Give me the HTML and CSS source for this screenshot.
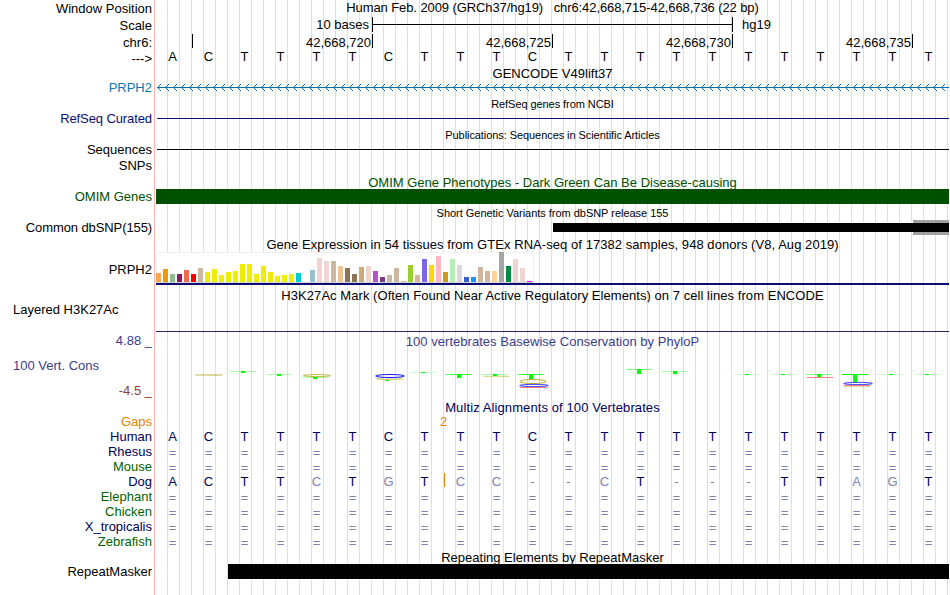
FILE: index.html
```
<!DOCTYPE html>
<html lang="en">
<head>
    <meta charset="UTF-8">
    <meta name="viewport" content="width=device-width, initial-scale=1.0">
    <title>Genome Browser - PRPH2</title>
    <link rel="stylesheet" href="styles.css">
</head>
<body>
    <div class="browser">
        <!-- Ruler -->
        <div class="row position">
            <div class="label">Window Position</div>
            <div class="data title t-position">Human Feb. 2009 (GRCh37/hg19)   chr6:42,668,715-42,668,736 (22 bp)</div>
        </div>
        <div class="row scale">
            <div class="label">Scale</div>
            <div class="data">
                <span class="scale-size">10 bases</span>
                <div class="scale-bar"><div class="scale-line"></div></div>
                <span class="scale-db">hg19</span>
            </div>
        </div>
        <div class="row ruler">
            <div class="label">chr6:</div>
            <div class="data">
                <span class="tick first"></span>
                <span class="tick">42,668,720</span>
                <span class="tick">42,668,725</span>
                <span class="tick">42,668,730</span>
                <span class="tick">42,668,735</span>
            </div>
        </div>
        <div class="row sequence">
            <div class="label">---&gt;</div>
            <div class="data"><div class="bases" data-seq="ACTTTTCTTTCTTTTTTTTTTT"></div></div>
        </div>

        <!-- Genes -->
        <div class="row title-row">
            <div class="label"></div>
            <div class="data title">GENCODE V49lift37</div>
        </div>
        <div class="row gencode">
            <div class="label">PRPH2</div>
            <div class="data">
                <svg width="793" height="15" shape-rendering="crispEdges">
                    <defs>
                        <pattern id="intron" width="8" height="15" patternUnits="userSpaceOnUse">
                            <path d="M4 4h1v1h-1zM3 5h1v1h-1zM2 6h1v1h-1zM1 7h1v1h-1zM2 8h1v1h-1zM3 9h1v1h-1zM4 10h1v1h-1z"/>
                        </pattern>
                    </defs>
                    <rect x="1" y="7" width="792" height="1"/>
                    <rect width="790" height="15" fill="url(#intron)"/>
                </svg>
            </div>
        </div>
        <div class="row small-row">
            <div class="label"></div>
            <div class="data title small t-refseq">RefSeq genes from NCBI</div>
        </div>
        <div class="row refseq">
            <div class="label">RefSeq Curated</div>
            <div class="data"><div class="line"></div></div>
        </div>
        <div class="row small-row">
            <div class="label"></div>
            <div class="data title small t-pubs">Publications: Sequences in Scientific Articles</div>
        </div>
        <div class="row">
            <div class="label">Sequences</div>
            <div class="data"><div class="line"></div></div>
        </div>
        <div class="row snps">
            <div class="label">SNPs</div>
            <div class="data"></div>
        </div>

        <!-- Phenotypes and variants -->
        <div class="row title-row omim">
            <div class="label"></div>
            <div class="data title">OMIM Gene Phenotypes - Dark Green Can Be Disease-causing</div>
        </div>
        <div class="row omim">
            <div class="label">OMIM Genes</div>
            <div class="data"><div class="bar"></div></div>
        </div>
        <div class="row small-row">
            <div class="label"></div>
            <div class="data title small t-dbsnp">Short Genetic Variants from dbSNP release 155</div>
        </div>
        <div class="row dbsnp">
            <div class="label">Common dbSNP(155)</div>
            <div class="data">
                <div class="variant"></div>
                <div class="variant overlap"></div>
            </div>
        </div>

        <!-- Expression -->
        <div class="row gtex-title">
            <div class="label"></div>
            <div class="data title t-gtex">Gene Expression in 54 tissues from GTEx RNA-seq of 17382 samples, 948 donors (V8, Aug 2019)</div>
        </div>
        <div class="row gtex">
            <div class="label">PRPH2</div>
            <div class="data"><div class="chart" id="gtex"></div></div>
        </div>

        <!-- Regulation -->
        <div class="row h3k-title">
            <div class="label"></div>
            <div class="data title t-h3k">H3K27Ac Mark (Often Found Near Active Regulatory Elements) on 7 cell lines from ENCODE</div>
        </div>
        <div class="row h3k">
            <div class="label left">Layered H3K27Ac</div>
            <div class="data"></div>
        </div>

        <!-- Conservation -->
        <div class="row cons">
            <div class="label">
                <div>4.88 _</div>
                <div class="left">100 Vert. Cons</div>
                <div class="min">-4.5 _</div>
            </div>
            <div class="data">
                <div class="title t-cons">100 vertebrates Basewise Conservation by PhyloP</div>
                <svg class="logo" width="793" height="49" viewBox="156 349 793 49">
                    <!-- thin caps of the T letters -->
                    <g class="cap" shape-rendering="crispEdges">
                        <rect x="230" y="371" width="26" height="1" opacity=".35"/>
                        <rect x="266" y="374" width="26" height="1" opacity=".3"/>
                        <rect x="302" y="377" width="26" height="1" opacity=".3"/>
                        <rect x="410" y="372" width="26" height="1" opacity=".2"/>
                        <rect x="446" y="374" width="26" height="1" opacity=".75"/>
                        <rect x="482" y="374" width="26" height="1" opacity=".35"/>
                        <rect x="518" y="374" width="26" height="1" opacity=".8"/>
                        <rect x="626" y="369" width="26" height="1" opacity=".5"/>
                        <rect x="662" y="371" width="26" height="1" opacity=".35"/>
                        <rect x="734" y="374" width="26" height="1" opacity=".2"/>
                        <rect x="770" y="374" width="26" height="1" opacity=".2"/>
                        <rect x="806" y="374" width="26" height="1" opacity=".5"/>
                        <rect x="842" y="374" width="26" height="1"/>
                        <rect x="878" y="374" width="26" height="1" opacity=".2"/>
                        <rect x="914" y="374" width="26" height="1" opacity=".2"/>
                    </g>
                    <!-- stems -->
                    <g class="stem" shape-rendering="crispEdges">
                        <rect x="241" y="371" width="4" height="2"/>
                        <rect x="277" y="374" width="4" height="2"/>
                        <rect x="313" y="377" width="4" height="2"/>
                        <rect x="385" y="380" width="4" height="1"/>
                        <rect x="421" y="372" width="4" height="1"/>
                        <rect x="457" y="374" width="4" height="4"/>
                        <rect x="493" y="374" width="4" height="2"/>
                        <rect x="529" y="374" width="4" height="5"/>
                        <rect x="637" y="369" width="4" height="5"/>
                        <rect x="673" y="371" width="4" height="3"/>
                        <rect x="745" y="374" width="4" height="1"/>
                        <rect x="781" y="374" width="4" height="1"/>
                        <rect x="817" y="374" width="4" height="3"/>
                        <rect x="853" y="374" width="4" height="8"/>
                        <rect x="889" y="374" width="4" height="1"/>
                        <rect x="925" y="374" width="4" height="1"/>
                    </g>
                    <!-- G -->
                    <g class="g">
                        <ellipse cx="209" cy="375" rx="13.5" ry=".4" opacity=".4"/>
                        <ellipse cx="317" cy="375.6" rx="13.5" ry="1" opacity=".7"/>
                        <ellipse cx="389.5" cy="378.7" rx="13" ry=".8" opacity=".5"/>
                        <ellipse cx="496.5" cy="376.4" rx="13" ry=".3" opacity=".3"/>
                        <ellipse cx="533" cy="381.5" rx="13.2" ry="2" opacity=".85"/>
                        <ellipse cx="857" cy="386.3" rx="13" ry=".3" opacity=".3"/>
                    </g>
                    <!-- C -->
                    <g class="c">
                        <ellipse cx="390" cy="376" rx="14.3" ry="1.5"/>
                        <ellipse cx="534" cy="385.5" rx="14.3" ry="1.1" opacity=".8"/>
                        <ellipse cx="858" cy="383.5" rx="14.3" ry="1.1" opacity=".8"/>
                    </g>
                    <!-- A -->
                    <g class="a" shape-rendering="crispEdges">
                        <rect x="520" y="387" width="27" height="1"/>
                        <rect x="807" y="377" width="26" height="1"/>
                        <rect x="844" y="385" width="26" height="1"/>
                    </g>
                </svg>
            </div>
        </div>

        <!-- Alignments -->
        <div class="row multiz-title">
            <div class="label"></div>
            <div class="data title t-multiz">Multiz Alignments of 100 Vertebrates</div>
        </div>
        <div class="row gaps">
            <div class="label">Gaps</div>
            <div class="data"><span class="gap-size">2</span></div>
        </div>
        <div class="row species">
            <div class="label">Human</div>
            <div class="data"><div class="bases" data-seq="ACTTTTCTTTCTTTTTTTTTTT"></div></div>
        </div>
        <div class="row species">
            <div class="label">Rhesus</div>
            <div class="data"><div class="bases" data-seq="======================"></div></div>
        </div>
        <div class="row species green">
            <div class="label">Mouse</div>
            <div class="data"><div class="bases" data-seq="======================"></div></div>
        </div>
        <div class="row species">
            <div class="label">Dog</div>
            <div class="data">
                <div class="bases" data-seq="ACTTcTgTcc--cT---TTagT"></div>
                <span class="insert"></span>
            </div>
        </div>
        <div class="row species green">
            <div class="label">Elephant</div>
            <div class="data"><div class="bases" data-seq="======================"></div></div>
        </div>
        <div class="row species green">
            <div class="label">Chicken</div>
            <div class="data"><div class="bases" data-seq="======================"></div></div>
        </div>
        <div class="row species">
            <div class="label">X_tropicalis</div>
            <div class="data"><div class="bases" data-seq="======================"></div></div>
        </div>
        <div class="row species green">
            <div class="label">Zebrafish</div>
            <div class="data"><div class="bases" data-seq="======================"></div></div>
        </div>

        <!-- Repeats -->
        <div class="row repeat-title">
            <div class="label"></div>
            <div class="data title">Repeating Elements by RepeatMasker</div>
        </div>
        <div class="row repeat">
            <div class="label">RepeatMasker</div>
            <div class="data"><div class="bar"></div></div>
        </div>
        <div class="row footer">
            <div class="label"></div>
            <div class="data"></div>
        </div>
    </div>

    <script>
        // One cell per base. Lower case marks a base that differs from human.
        document.querySelectorAll('.bases').forEach(el => {
            for (const base of el.dataset.seq) {
                const cell = document.createElement('span');
                cell.textContent = base.toUpperCase();
                if (base === '=') cell.className = 'unaligned';
                else if (base === '-' || base !== base.toUpperCase()) cell.className = 'mismatch';
                el.appendChild(cell);
            }
        });

        // Tissue colour and bar height in pixels
        const tissues = [
            ['#ffa54f', 9], ['#ee9a00', 13], ['#8fbc8f', 8], ['#8b1c62', 8], ['#ee6a50', 12], ['#ff0000', 8],
            ['#cdb79e', 14], ['#eeee00', 10], ['#eeee00', 13], ['#eeee00', 7], ['#eeee00', 10], ['#eeee00', 11],
            ['#eeee00', 18], ['#eeee00', 18], ['#eeee00', 8], ['#eeee00', 16], ['#eeee00', 10], ['#eeee00', 6],
            ['#eeee00', 7], ['#eeee00', 8], ['#00cdcd', 9], ['#ee82ee', 0], ['#9ac0cd', 12], ['#eed5d2', 24],
            ['#eed5d2', 21], ['#cdb79e', 21], ['#eec591', 16], ['#8b7355', 14], ['#8b7355', 8], ['#cdaa7d', 15],
            ['#eed5d2', 16], ['#b452cd', 11], ['#7a378b', 5], ['#cdb79e', 7], ['#cdb79e', 14], ['#cdb79e', 1],
            ['#9acd32', 17], ['#cdb79e', 7], ['#7a67ee', 23], ['#ffd700', 17], ['#ffb6c1', 26], ['#cd9b1d', 10],
            ['#b4eeb4', 23], ['#d9d9d9', 17], ['#3a5fcd', 5], ['#1e90ff', 5], ['#cdb79e', 15], ['#cdb79e', 11],
            ['#ffd39b', 11], ['#a6a6a6', 30], ['#008b45', 16], ['#eed5d2', 23], ['#eed5d2', 14], ['#ff00ff', 1]
        ];
        const chart = document.getElementById('gtex');
        tissues.forEach(([color, height]) => {
            const bar = document.createElement('div');
            bar.style.height = `${height}px`;
            bar.style.background = color;
            chart.appendChild(bar);
        });
    </script>
</body>
</html>
```
FILE: styles.css
```
* {
    margin: 0;
    padding: 0;
    box-sizing: border-box;
}

body {
    background: #fff;
    color: #000;
    font: 13px/15px "Liberation Sans", Arial, sans-serif;
    overflow: hidden;
}

.browser {
    width: 949px;
}

.row {
    display: flex;
    height: 15px;
}

.label {
    width: 155px;
    padding-right: 2px;
    border-right: 1px solid #ffb4b4;
    text-align: right;
    white-space: nowrap;
}

.label.left,
.label .left {
    padding-left: 13px;
    text-align: left;
}

/* vertical guide lines every 12px */
.data {
    position: relative;
    width: 793px;
    margin-left: 1px;
    background: repeating-linear-gradient(to right, transparent 0 11px, #dcdcfa 11px 12px);
}

.title {
    text-align: center;
    white-space: pre;
}

.small {
    font-size: 11px;
}

.t-position {
    letter-spacing: -0.09px;
}

.t-refseq,
.t-pubs {
    letter-spacing: -0.07px;
}

.t-dbsnp {
    letter-spacing: -0.03px;
}

.t-gtex,
.t-h3k {
    letter-spacing: 0.055px;
}

.t-cons {
    letter-spacing: 0.03px;
}

.t-multiz {
    letter-spacing: 0.1px;
}

.title-row {
    height: 14px;
}

.small-row {
    height: 16px;
}

.small-row .data {
    padding-top: 2px;
}

.line {
    height: 8px;
    margin-left: 1px;
    border-bottom: 1px solid currentColor;
}

.bar {
    height: 15px;
    background: currentColor;
}

.bases {
    display: grid;
    grid-template-columns: repeat(22, 36px);
    margin-left: -1.5px;
    text-align: center;
}

/* Ruler */
.position {
    height: 17px;
}

.position .label,
.scale .label,
.ruler .label {
    padding-top: 1px;
}

.scale {
    height: 17px;
}

.scale .data,
.ruler .data {
    display: flex;
}

.scale-size {
    width: 213px;
    text-align: right;
}

.scale-bar {
    width: 361px;
    height: 15px;
    margin-left: 3px;
    border: solid #000;
    border-width: 0 1px;
}

.scale-line {
    height: 8px;
    border-bottom: 1px solid #000;
}

.scale-db {
    margin-left: 9px;
}

.tick {
    width: 180px;
    height: 14px;
    padding: 1px 1px 0 0;
    border-right: 1px solid #000;
    text-align: right;
}

.tick.first {
    width: 37px;
}

.sequence {
    height: 17px;
}

.sequence .label {
    padding-top: 2px;
}

/* Genes */
.gencode .label {
    color: #0c78b4;
}

.gencode svg {
    display: block;
    fill: #0c6eaa;
}

.refseq {
    color: #0c0c78;
}

.refseq .label,
.dbsnp .label {
    letter-spacing: -0.1px;
}

.snps {
    height: 18px;
}

.snps .label {
    padding-top: 1px;
}

/* Phenotypes and variants */
.omim {
    color: #005000;
}

.dbsnp .data {
    display: flex;
    align-items: center;
    justify-content: flex-end;
}

.variant {
    width: 360px;
    height: 9px;
    background: #000;
}

.variant.overlap {
    width: 36px;
    height: 15px;
    border: solid #a0a0a0;
    border-width: 3px 0;
}

/* Expression */
.gtex-title {
    height: 17px;
}

.gtex-title .data {
    padding-top: 2px;
}

.gtex {
    height: 33px;
}

.gtex .label {
    padding-top: 10px;
}

.gtex .data {
    border-bottom: 2px solid #0c0c78;
}

.chart {
    display: flex;
    align-items: flex-end;
    gap: 2px;
    width: 378px;
    height: 31px;
    background: #fff;
    border-bottom: 1px solid #d4d4d4;
    box-shadow: inset 1px 1px #f0f0f0, inset -1px 0 #f0f0f0;
}

.chart div {
    width: 5px;
}

/* Regulation */
.h3k-title {
    height: 17px;
}

.h3k-title .data {
    padding-top: 3px;
}

.h3k {
    height: 30px;
}

.h3k .data {
    border-bottom: 1px solid #28285a;
}

/* Conservation */
.cons {
    height: 66px;
    color: #3c3c8c;
}

.cons .label {
    display: flex;
    flex-direction: column;
    gap: 10px;
    padding-top: 1px;
}

.cons .min {
    color: #8c3c3c;
}

.cons .data {
    padding-top: 2px;
}

.logo {
    display: block;
}

.cap,
.stem {
    fill: #00ff00;
}

.g,
.c {
    fill: none;
}

.g {
    stroke: #aaa000;
}

.c {
    stroke: #1414ff;
}

.a {
    fill: #ff8080;
}

/* Alignments */
.multiz-title {
    height: 16px;
    color: #00005a;
}

.multiz-title .data {
    padding-top: 2px;
}

.gaps {
    color: #e68200;
}

.gap-size {
    display: block;
    padding-left: 284px;
}

.species {
    color: #00005a;
}

.species.green .label {
    color: #006400;
}

.species .mismatch,
.species .unaligned {
    color: #8080b0;
}

.species .unaligned {
    height: 15px;
    padding-top: 1px;
}

.insert {
    position: absolute;
    left: 288px;
    top: -1px;
    width: 1px;
    height: 14px;
    background: #e68200;
}

/* Repeats */
.repeat-title .data {
    padding-top: 1px;
}

.repeat .bar {
    margin-left: 72px;
}

.footer {
    height: 16px;
}
```
